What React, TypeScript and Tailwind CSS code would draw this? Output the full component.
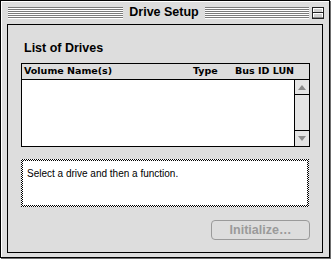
const stripes =
  "h-[12px] bg-[image:repeating-linear-gradient(to_bottom,#7a7a7a_0_1px,#ffffff_1px_2px)]";

function CollapseBox() {
  return (
    <svg width="12" height="12" viewBox="0 0 12 12" className="block">
      <rect x="0.5" y="0.5" width="11" height="11" fill="#cfcfcf" stroke="#222" />
      <rect x="1.5" y="1.5" width="9" height="9" fill="none" stroke="#fff" strokeWidth="1" />
      <line x1="1" y1="5.5" x2="11" y2="5.5" stroke="#222" />
      <line x1="1" y1="6.5" x2="11" y2="6.5" stroke="#fff" />
      <line x1="1" y1="10.5" x2="11" y2="10.5" stroke="#888" />
    </svg>
  );
}

function Arrow({ up }: { up?: boolean }) {
  return (
    <svg width="8" height="5" viewBox="0 0 8 5" className="block">
      <path d={up ? "M0 5 L4 0 L8 5 Z" : "M0 0 L8 0 L4 5 Z"} fill="#8a8a8a" />
    </svg>
  );
}

export default function App() {
  return (
    <div className="h-[263px] w-[333px] bg-white font-['Liberation_Sans',sans-serif]">
      <div className="flex h-[258px] w-[330px] flex-col border border-black bg-[#dddddd] shadow-[1px_1px_0_#6f6f6f,inset_1px_1px_0_#fff]">
        {/* title bar */}
        <div className="flex h-[23px] shrink-0 items-center pl-[7px] pr-[5px]">
          <div className={`${stripes} w-[115px]`} />
          <div className="w-[82px] text-center text-[12.5px] font-bold leading-none text-black">
            Drive Setup
          </div>
          <div className={`${stripes} w-[104px]`} />
          <div className="ml-[3px]">
            <CollapseBox />
          </div>
        </div>

        {/* content */}
        <div className="mx-[6px] flex h-[229px] flex-col border border-black bg-[#dddddd]">
          <div className="ml-[16px] mt-[15px] text-[12.5px] font-bold leading-[16px] text-black">
            List of Drives
          </div>

          {/* drive list */}
          <div className="ml-[13px] mt-[7px] flex h-[84px] w-[289px] flex-col border border-black bg-white">
            <div className="flex h-[16px] shrink-0 items-center border-b border-black bg-[#dddddd] pl-[2px] font-['DejaVu_Sans',sans-serif] text-[9.5px] font-bold text-black">
              <span className="w-[169px]">Volume Name(s)</span>
              <span className="w-[42px]">Type</span>
              <span>Bus ID LUN</span>
            </div>
            <div className="flex flex-1">
              <div className="flex-1" />
              <div className="flex w-[15px] flex-col border-l border-black bg-[#e4e4e4]">
                <div className="flex h-[15px] items-center justify-center border-b border-black">
                  <Arrow up />
                </div>
                <div className="flex-1" />
                <div className="flex h-[16px] items-center justify-center border-t border-black">
                  <Arrow />
                </div>
              </div>
            </div>
          </div>

          {/* status message */}
          <div className="ml-[13px] mt-[12px] h-[48px] w-[288px] bg-[image:repeating-conic-gradient(#000_0_25%,#fff_0_50%)] bg-[length:2px_2px] p-[2px]">
            <div className="h-full w-full bg-white px-[4px] pt-[7px] text-[10px] leading-[12px] text-black">
              Select a drive and then a function.
            </div>
          </div>

          {/* button */}
          <button className="ml-[203px] mt-[13px] flex h-[20px] w-[99px] items-center justify-center rounded-[4px] border border-[#9a9a9a] bg-[#dddddd] text-[12.5px] font-bold text-[#9a9a9a]">
            Initialize…
          </button>
        </div>
      </div>
    </div>
  );
}
